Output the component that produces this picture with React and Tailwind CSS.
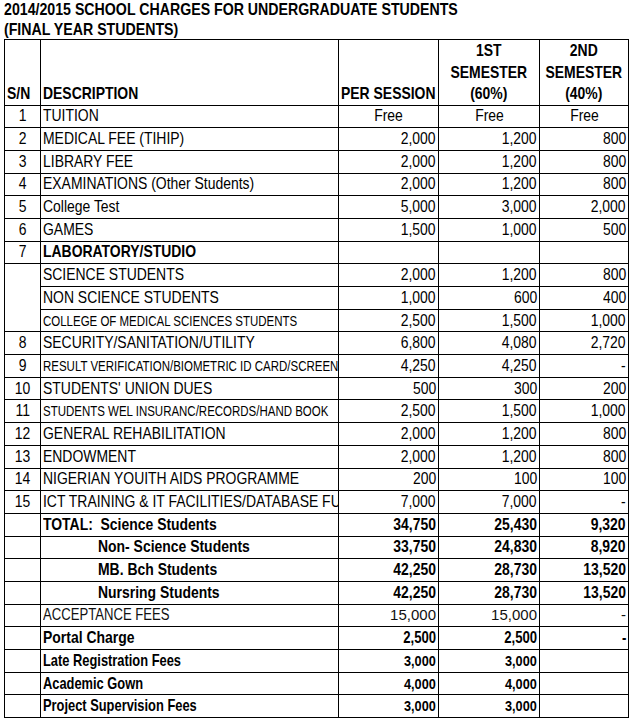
// Excel-style sheet. Arial Narrow isn't available, so Liberation Sans is squeezed with scale-x.
const FONT = { fontFamily: '"Liberation Sans", Arial, sans-serif' };

const rows = [
  { sn: '1', desc: 'TUITION', a: 'Free', b: 'Free', c: 'Free', center: true },
  { sn: '2', desc: 'MEDICAL FEE (TIHIP)', a: '2,000', b: '1,200', c: '800' },
  { sn: '3', desc: 'LIBRARY FEE', a: '2,000', b: '1,200', c: '800' },
  { sn: '4', desc: 'EXAMINATIONS (Other Students)', a: '2,000', b: '1,200', c: '800' },
  { sn: '5', desc: 'College Test', a: '5,000', b: '3,000', c: '2,000' },
  { sn: '6', desc: 'GAMES', a: '1,500', b: '1,000', c: '500' },
  { sn: '7', desc: 'LABORATORY/STUDIO', a: '', b: '', c: '', descBold: true },
  { sn: '', span: 3, desc: 'SCIENCE STUDENTS', a: '2,000', b: '1,200', c: '800' },
  { skipSn: true, desc: 'NON SCIENCE STUDENTS', a: '1,000', b: '600', c: '400' },
  { skipSn: true, desc: 'COLLEGE OF MEDICAL SCIENCES STUDENTS', a: '2,500', b: '1,500', c: '1,000', descSize: 'text-[14px]' },
  { sn: '8', desc: 'SECURITY/SANITATION/UTILITY', a: '6,800', b: '4,080', c: '2,720' },
  { sn: '9', desc: 'RESULT VERIFICATION/BIOMETRIC ID CARD/SCREENING', a: '4,250', b: '4,250', c: '-', descSize: 'text-[14px]' },
  { sn: '10', desc: "STUDENTS' UNION DUES", a: '500', b: '300', c: '200' },
  { sn: '11', desc: 'STUDENTS WEL INSURANC/RECORDS/HAND BOOK', a: '2,500', b: '1,500', c: '1,000', descSize: 'text-[14px]' },
  { sn: '12', desc: 'GENERAL REHABILITATION', a: '2,000', b: '1,200', c: '800' },
  { sn: '13', desc: 'ENDOWMENT', a: '2,000', b: '1,200', c: '800' },
  { sn: '14', desc: 'NIGERIAN YOUITH AIDS PROGRAMME', a: '200', b: '100', c: '100' },
  { sn: '15', desc: 'ICT TRAINING & IT FACILITIES/DATABASE FUND', a: '7,000', b: '7,000', c: '-' },
  { sn: '', desc: 'TOTAL:\u00a0 Science Students', a: '34,750', b: '25,430', c: '9,320', bold: true },
  { sn: '', desc: 'Non- Science Students', a: '33,750', b: '24,830', c: '8,920', bold: true, indent: true },
  { sn: '', desc: 'MB. Bch Students', a: '42,250', b: '28,730', c: '13,520', bold: true, indent: true },
  { sn: '', desc: 'Nursring Students', a: '42,250', b: '28,730', c: '13,520', bold: true, indent: true },
  { sn: '', desc: 'ACCEPTANCE FEES', a: '15,000', b: '15,000', c: '-', light: true, descSize: 'text-[16px] text-[#111]' },
  { sn: '', desc: 'Portal Charge', a: '2,500', b: '2,500', c: '-', bold: true, numSize: 'text-[16px]' },
  { sn: '', desc: 'Late Registration Fees', a: '3,000', b: '3,000', c: '', bold: true, descSize: 'text-[15.7px]', numSize: 'text-[15.5px]' },
  { sn: '', desc: 'Academic Gown', a: '4,000', b: '4,000', c: '', bold: true, descSize: 'text-[15.7px]', numSize: 'text-[15.5px]' },
  { sn: '', desc: 'Project Supervision Fees', a: '3,000', b: '3,000', c: '', bold: true, descSize: 'text-[15.7px]', numSize: 'text-[15.5px]' },
];

function Num({ v, r }) {
  if (r.light) {
    return <td className="border border-black p-0 pr-[2px] text-right text-[15px] text-[#111]">{v}</td>;
  }
  const size = r.numSize ?? 'text-[17px]';
  return (
    <td className={`border border-black p-0 ${r.center ? 'text-center' : 'pr-[2px] text-right'} ${size} ${r.bold ? 'font-bold' : ''}`}>
      <span className={`inline-block whitespace-nowrap scale-x-[0.82] ${r.center ? 'origin-center' : 'origin-right'}`}>{v}</span>
    </td>
  );
}

function Row({ r }) {
  const size = r.descSize ?? 'text-[17px]';
  return (
    <tr className="h-[22.7px]">
      {!r.skipSn && (
        <td rowSpan={r.span ?? 1} className="border border-black p-0 text-center text-[17px]">
          <span className="inline-block scale-x-[0.82]">{r.sn}</span>
        </td>
      )}
      <td className={`border border-black p-0 ${r.indent ? 'pl-[57px]' : 'pl-[2px]'} ${size} ${r.bold || r.descBold ? 'font-bold' : ''}`}>
        <div className="overflow-hidden whitespace-nowrap">
          <span className="inline-block origin-left scale-x-[0.82]">{r.desc}</span>
        </div>
      </td>
      <Num v={r.a} r={r} />
      <Num v={r.b} r={r} />
      <Num v={r.c} r={r} />
    </tr>
  );
}

function Head({ children }) {
  return (
    <div className="flex justify-center whitespace-nowrap">
      <span className="inline-block scale-x-[0.82] text-center">{children}</span>
    </div>
  );
}

export default function App() {
  return (
    <div className="h-[724px] w-[633px] overflow-hidden bg-white text-black" style={FONT}>
      <div className="pl-[4px] text-[17.3px] font-bold leading-[19.5px]">
        <div className="whitespace-nowrap"><span className="inline-block origin-left scale-x-[0.82]">2014/2015 SCHOOL CHARGES FOR UNDERGRADUATE STUDENTS</span></div>
        <div className="whitespace-nowrap"><span className="inline-block origin-left scale-x-[0.82]">(FINAL YEAR STUDENTS)</span></div>
      </div>
      <table className="ml-[4px] w-[624px] table-fixed border-collapse leading-[20px]">
        <colgroup>
          <col className="w-[36px]" />
          <col className="w-[298px]" />
          <col className="w-[100px]" />
          <col className="w-[101px]" />
          <col className="w-[89px]" />
        </colgroup>
        <thead>
          <tr className="h-[65px] text-[17px] font-bold leading-[21.5px]">
            <th className="border border-black p-0 pl-[2px] text-left align-bottom">
              <span className="inline-block origin-left scale-x-[0.82] whitespace-nowrap">S/N</span>
            </th>
            <th className="border border-black p-0 pl-[2px] text-left align-bottom">
              <span className="inline-block origin-left scale-x-[0.82] whitespace-nowrap">DESCRIPTION</span>
            </th>
            <th className="border border-black p-0 pl-[2px] text-left align-bottom">
              <span className="inline-block origin-left scale-x-[0.82] whitespace-nowrap">PER SESSION</span>
            </th>
            <th className="border border-black p-0 align-bottom">
              <Head>1ST<br />SEMESTER<br />(60%)</Head>
            </th>
            <th className="border border-black p-0 align-bottom">
              <Head>2ND<br />SEMESTER<br />(40%)</Head>
            </th>
          </tr>
        </thead>
        <tbody>
          {rows.map((r, i) => (
            <Row key={i} r={r} />
          ))}
        </tbody>
      </table>
    </div>
  );
}
